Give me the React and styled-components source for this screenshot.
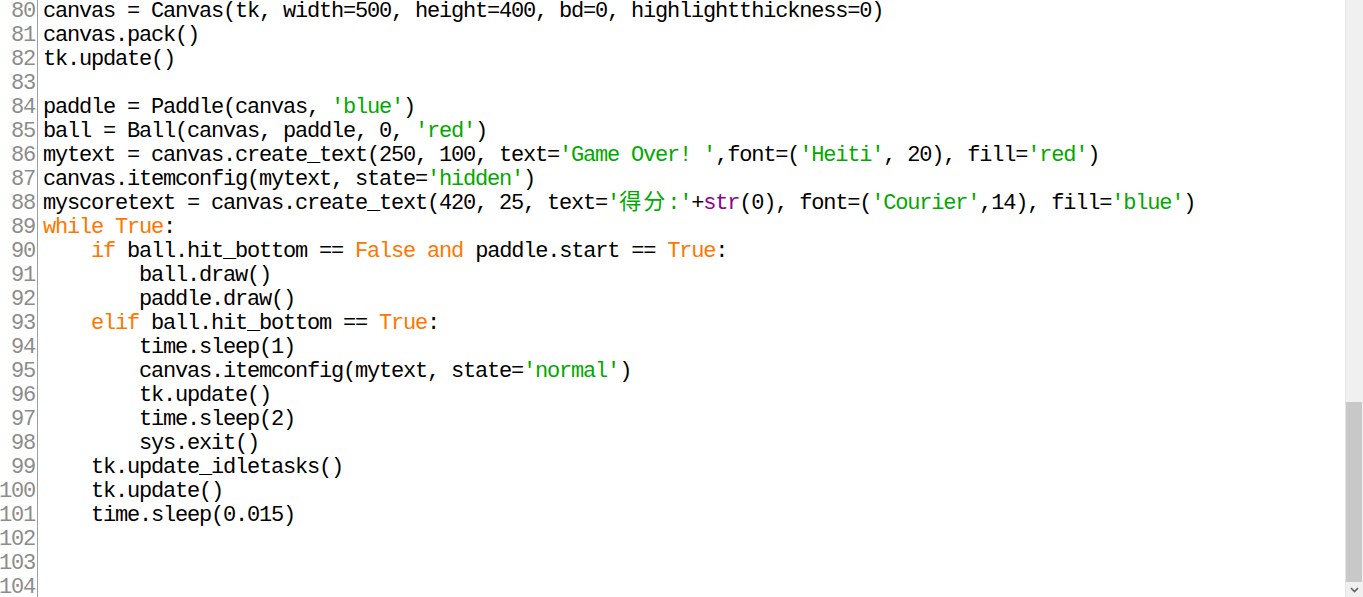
import React from 'react'
import styled, { createGlobalStyle } from 'styled-components'

const GlobalStyle = createGlobalStyle`
html, body {
  margin: 0;
  padding: 0;
  background: #ffffff;
  overflow: hidden;
}
`

const Editor = styled.div`
display: flex;
height: 597px;
width: 1363px;
background: #ffffff;
font-family: "Liberation Mono", "Noto Sans CJK SC", monospace;
font-size: 22px;
letter-spacing: -1.2px;
line-height: 24px;
overflow: hidden;
`

const Gutter = styled.div`
width: 37px;
flex-shrink: 0;
border-right: 1px solid #a0a0a0;
display: flex;
flex-direction: column;
align-items: flex-end;
`

const LineNo = styled.div`
height: 24px;
color: #8c8c8c;
padding-right: 2px;
`

const Code = styled.div`
flex: 1;
padding-left: 5px;
`

const Line = styled.div`
height: 24px;
white-space: pre;
color: #000000;
`

const colors = {
  kw: '#ff7700',
  str: '#00aa00',
  builtin: '#900090',
  plain: '#000000',
}

const Token = styled.span`
color: ${p => colors[p.$kind]};
`

const Wide = styled.span`
letter-spacing: 2px;
`

const Scrollbar = styled.div`
width: 17px;
flex-shrink: 0;
border-left: 1px solid #e3e3e3;
background: #f0f0f0;
display: flex;
flex-direction: column;
`

const Track = styled.div`
flex: 1;
`

const Thumb = styled.div`
height: 180px;
margin: 0 1px 0 0;
background: #c8c8c8;
`

const Arrow = styled.div`
height: 15px;
display: flex;
align-items: center;
justify-content: center;
`

const lines = [
  "canvas = Canvas(tk, width=500, height=400, bd=0, highlightthickness=0)",
  "canvas.pack()",
  "tk.update()",
  "",
  "paddle = Paddle(canvas, 'blue')",
  "ball = Ball(canvas, paddle, 0, 'red')",
  "mytext = canvas.create_text(250, 100, text='Game Over! ',font=('Heiti', 20), fill='red')",
  "canvas.itemconfig(mytext, state='hidden')",
  "myscoretext = canvas.create_text(420, 25, text='得分:'+str(0), font=('Courier',14), fill='blue')",
  "while True:",
  "    if ball.hit_bottom == False and paddle.start == True:",
  "        ball.draw()",
  "        paddle.draw()",
  "    elif ball.hit_bottom == True:",
  "        time.sleep(1)",
  "        canvas.itemconfig(mytext, state='normal')",
  "        tk.update()",
  "        time.sleep(2)",
  "        sys.exit()",
  "    tk.update_idletasks()",
  "    tk.update()",
  "    time.sleep(0.015)",
  "",
  "",
  "",
]

// tiny python highlighter, IDLE colours
const tokenize = (src) => {
  const re = /('[^']*')|\b(while|True|False|if|elif|and)\b|\b(str)\b(?=\()/g
  const out = []
  let last = 0
  let m
  while ((m = re.exec(src))) {
    if (m.index > last) out.push(['plain', src.slice(last, m.index)])
    if (m[1]) out.push(['str', m[1]])
    else if (m[2]) out.push(['kw', m[2]])
    else out.push(['builtin', m[3]])
    last = re.lastIndex
  }
  if (last < src.length) out.push(['plain', src.slice(last)])
  return out
}

const renderText = (text) => {
  // CJK chars take two cells
  const parts = text.split(/([\u4e00-\u9fff]+)/)
  return parts.map((p, i) =>
    /[\u4e00-\u9fff]/.test(p) ? <Wide key={i}>{p}</Wide> : p
  )
}

const App = () => {
  return (
    <>
      <GlobalStyle />
      <Editor>
        <Gutter>
          {lines.map((_, i) => (
            <LineNo key={i}>{80 + i}</LineNo>
          ))}
        </Gutter>
        <Code>
          {lines.map((l, i) => (
            <Line key={i}>
              {tokenize(l).map(([kind, text], j) => (
                <Token key={j} $kind={kind}>{renderText(text)}</Token>
              ))}
            </Line>
          ))}
        </Code>
        <Scrollbar>
          <Track />
          <Thumb />
          <Arrow>
            <svg width="9" height="6" viewBox="0 0 9 6">
              <path d="M1 1 L4.5 4.5 L8 1" fill="none" stroke="#606060" strokeWidth="1.6" />
            </svg>
          </Arrow>
        </Scrollbar>
      </Editor>
    </>
  )
}

export default App
